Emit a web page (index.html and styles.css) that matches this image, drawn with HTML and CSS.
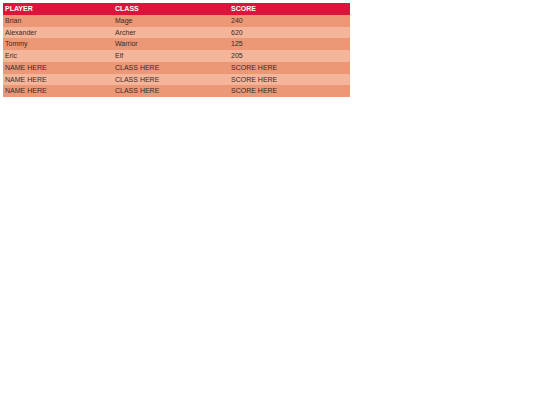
FILE: index.html
```html
<!DOCTYPE html>
<html>
<head>
<meta charset="utf-8">
<link rel="stylesheet" href="styles.css">
</head>
<body>
<table class="scores">
  <thead>
    <tr><th class="c1">PLAYER</th><th class="c2">CLASS</th><th>SCORE</th></tr>
  </thead>
  <tbody>
    <tr><td>Brian</td><td>Mage</td><td>240</td></tr>
    <tr><td>Alexander</td><td>Archer</td><td>620</td></tr>
    <tr><td>Tommy</td><td>Warrior</td><td>125</td></tr>
    <tr><td>Eric</td><td>Elf</td><td>205</td></tr>
    <tr><td>NAME HERE</td><td>CLASS HERE</td><td>SCORE HERE</td></tr>
    <tr><td>NAME HERE</td><td>CLASS HERE</td><td>SCORE HERE</td></tr>
    <tr><td>NAME HERE</td><td>CLASS HERE</td><td>SCORE HERE</td></tr>
  </tbody>
</table>
</body>
</html>
```
FILE: styles.css
```css
body {
  margin: 3px;
  background: #fff;
  font-family: "Liberation Sans", Arial, sans-serif;
}
.scores {
  width: 347px;
  border-collapse: collapse;
  font-size: 7px;
  table-layout: fixed;
}
.scores th, .scores td {
  text-align: left;
  padding: 0 2px;
  height: 11.75px;
  line-height: 11.75px;
  box-sizing: border-box;
  white-space: nowrap;
}
.scores .c1 { width: 110px; }
.scores .c2 { width: 116px; }
.scores th {
  background: #dc143c;
  color: #fff;
  font-weight: bold;
}
.scores td { color: #3a2a25; }
.scores tbody tr:nth-child(odd) { background: #ec9775; }
.scores tbody tr:nth-child(even) { background: #f5b59a; }
```
